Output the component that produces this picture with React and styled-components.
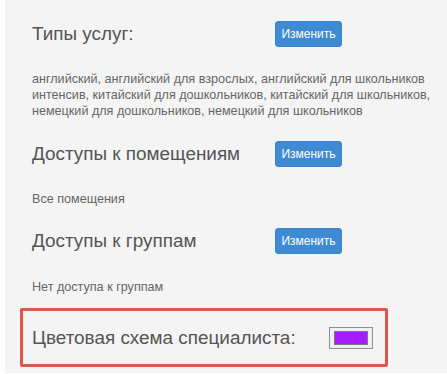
import React from "react";
import styled, { createGlobalStyle } from "styled-components";

const Global = createGlobalStyle`
  html, body { margin: 0; padding: 0; background: #ffffff; }
  body { font-family: "Liberation Sans", Arial, sans-serif; }
`;

const Page = styled.div`
  margin-left: 5px;
  min-height: 373px;
  background: #f4f4f4;
  padding: 21px 0 0 15px;
  box-sizing: border-box;
`;

const Section = styled.section`
  padding-left: 12px;
`;

const HeaderRow = styled.div`
  display: flex;
  align-items: center;
  height: 26px;
`;

const Heading = styled.h3`
  margin: 0;
  width: 243px;
  font-size: 18.9px;
  font-weight: normal;
  color: #555555;
  line-height: 26px;
`;

const Button = styled.button`
  height: 26px;
  width: 67px;
  padding: 0;
  border: 1px solid #3a86cc;
  border-radius: 3px;
  background: #3e8bd4;
  color: #ffffff;
  font-family: "Liberation Sans", Arial, sans-serif;
  font-size: 12px;
  line-height: 24px;
`;

const Text = styled.p`
  margin: ${(p) => p.$top}px 0 ${(p) => p.$bottom}px;
  font-size: 12.6px;
  line-height: 16px;
  color: #666666;
  max-width: 405px;
`;

const SchemeBox = styled.div`
  width: 368px;
  height: 59px;
  box-sizing: border-box;
  border: 3px solid #d9574b;
  border-radius: 2px;
  padding: 0 0 0 9px;
  display: flex;
  align-items: center;
`;

const SchemeHeading = styled(Heading)`
  width: 297px;
`;

const Swatch = styled.div`
  width: 44px;
  height: 22px;
  box-sizing: border-box;
  border: 1px solid #8f8f8f;
  background: #efefef;
  padding: 3px 4px;
  margin-top: 1px;
`;

const SwatchColor = styled.div`
  width: 100%;
  height: 100%;
  box-sizing: border-box;
  border: 1px solid #7a7a7a;
  background: ${(p) => p.$color};
`;

export default function App() {
  return (
    <>
      <Global />
      <Page>
        <Section>
          <HeaderRow>
            <Heading>Типы услуг:</Heading>
            <Button>Изменить</Button>
          </HeaderRow>
          <Text $top={24} $bottom={22}>
            английский, английский для взрослых, английский для школьников
            интенсив, китайский для дошкольников, китайский для школьников,
            немецкий для дошкольников, немецкий для школьников
          </Text>
        </Section>
        <Section>
          <HeaderRow>
            <Heading>Доступы к помещениям</Heading>
            <Button>Изменить</Button>
          </HeaderRow>
          <Text $top={24} $bottom={21}>Все помещения</Text>
        </Section>
        <Section>
          <HeaderRow>
            <Heading>Доступы к группам</Heading>
            <Button>Изменить</Button>
          </HeaderRow>
          <Text $top={25} $bottom={13}>Нет доступа к группам</Text>
        </Section>
        <SchemeBox>
          <SchemeHeading>Цветовая схема специалиста:</SchemeHeading>
          <Swatch>
            <SwatchColor $color="#a61aff" />
          </Swatch>
        </SchemeBox>
      </Page>
    </>
  );
}
